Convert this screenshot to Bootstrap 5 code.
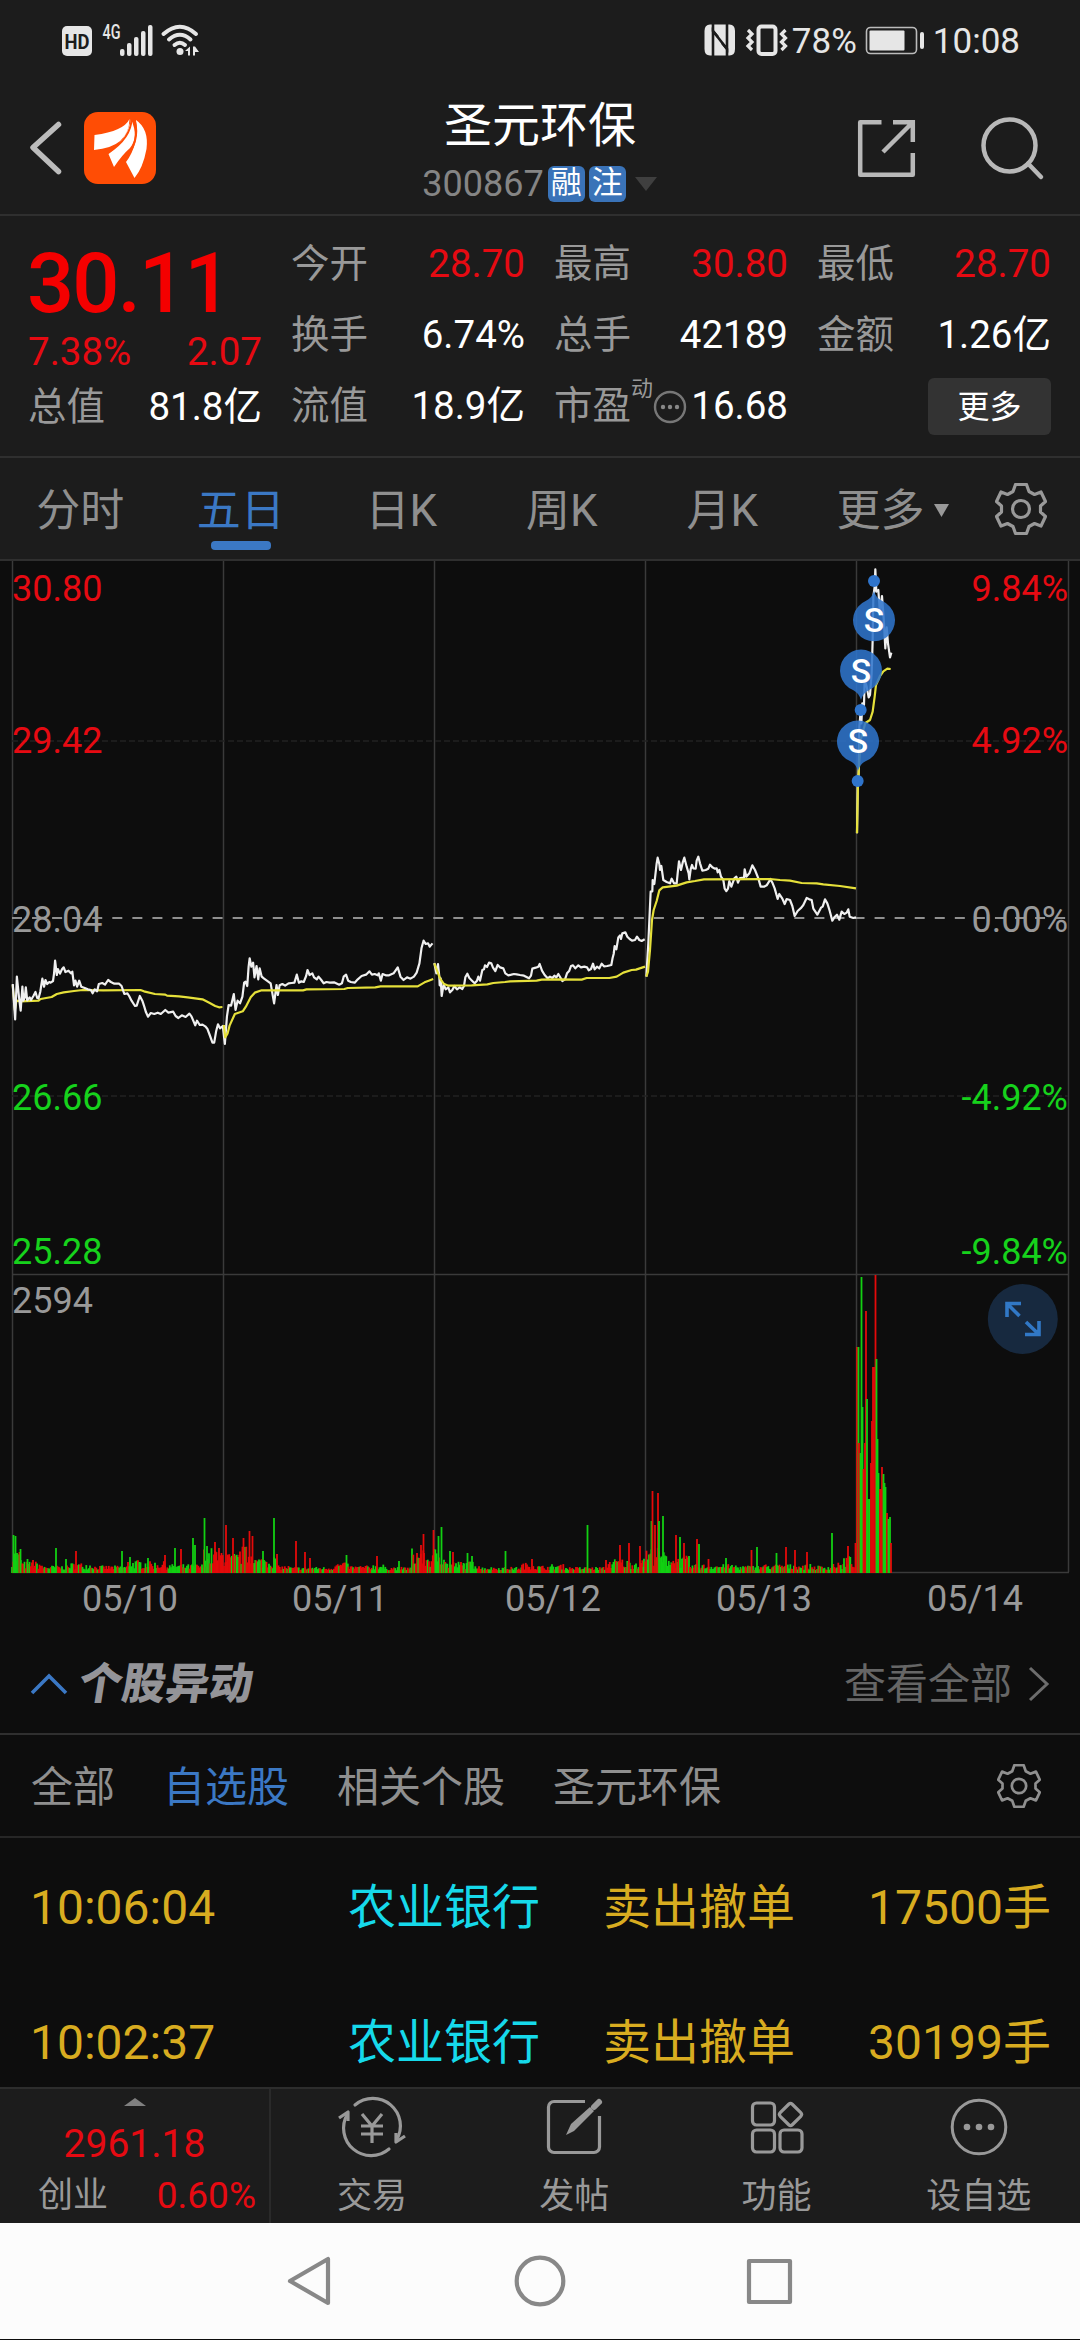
<!DOCTYPE html>
<html lang="zh-CN">
<head>
<meta charset="utf-8">
<meta name="viewport" content="width=device-width, initial-scale=1">
<title>圣元环保 300867</title>
<link rel="stylesheet" href="https://cdn.jsdelivr.net/npm/bootstrap@5.3.0/dist/css/bootstrap.min.css">
<style>
  body { background:#0d0d0d; color:#999; font-family:Roboto,"Noto Sans CJK SC",sans-serif; font-size:38.5px; line-height:1; width:1080px; height:2340px; overflow:hidden; }
  svg { display:block; flex:none; }
  .panel { background:#1c1c1c; }
  .rule { border-bottom:2px solid #2f2f2f; }
  .status { height:82px; padding:0 60px 0 60px; color:#e6e6e6; font-size:35px; }
  .topbar { height:134px; }
  .stock-name { font-size:48px; color:#fff; line-height:56px; }
  .stock-code { font-size:36px; color:#858585; line-height:36px; }
  .tag { width:37px; height:36px; border-radius:6px; background:#3a73b8; color:#fff; font-size:31px; line-height:34px; text-align:center; }
  .quote { height:242px; padding:13px 28px; display:grid; grid-template-columns:repeat(4,234px); column-gap:29px; }
  .cell { height:71px; }
  .cell b { font-weight:400; color:#fff; }
  .up, .cell b.up { color:#e60a12; }
  .price { font-size:83px; font-weight:500; letter-spacing:-1.8px; color:#f40000; line-height:76px; padding-top:17px; margin-left:-1px; height:104px; }
  .dyn { font-size:22px; align-self:flex-start; margin-top:7px; }
  .more-btn { width:123px; height:57px; border-radius:6px; background:#333; color:#fff; font-size:32px; }
  .periods { height:103px; font-size:44px; }
  .periods .nav-item { width:160.500px; text-align:center; position:relative; color:#8f8f8f; padding-top:4px; }
  .periods .more { width:176px; padding-left:34px; }
  .periods .on, .filters .on { color:#3b78c4; }
  .periods .on::after { content:""; position:absolute; left:50%; margin-left:-30px; top:56px; width:60px; height:9px; border-radius:4px; background:#3b78c4; }
  .chart text { font-size:36px; fill:#999; font-family:Roboto,sans-serif; }
  .chart .r { fill:#e60a12; } .chart .g { fill:#16d21c; }
  .chart .grid { stroke:#3a3a3a; stroke-width:1.5; fill:none; }
  .chart polyline { fill:none; stroke-width:2.2; stroke-linejoin:round; vector-effect:non-scaling-stroke; }
  .chart .px { stroke:#f0f0f0; } .chart .av { stroke:#e5e03a; }
  .section-title { height:103px; padding:2px 30px 0; }
  .section-title h2 { font-size:43.5px; font-weight:900; color:#949498; margin:2px 0 0 11px; transform:skewX(-9deg); line-height:1; }
  .see-all { font-size:42px; color:#666; padding-top:3px; }
  .filters { height:103px; padding:0 39px 0 31px; font-size:42px; color:#8f8f8f; border-bottom:2px solid #262626; }
  .filters span { padding-top:4px; }
  .moves { height:249px; overflow:hidden; font-size:48px; color:#d8ac20; }
  .moves .item { height:135px; padding:4px 29px 0 30px; }
  .moves .time { width:318px; } .moves .who { width:255px; color:#16d9ea; }
  .dock { height:136px; border-top:2px solid #2d2d2d; font-size:35px; color:#999; }
  .dock .idx { flex:0 0 271px; border-right:2px solid #2a2a2a; }
  .dock .act { flex:1 1 0; padding-top:6px; }
  .dock .act span { margin-top:20px; }
  .idx-value { font-size:39px; margin-top:18px; }
  .idx-row { margin-top:13px; padding:0 13px 0 38px; }
  .idx-pct { font-size:37px; }
  .sysnav { height:116px; background:#fcfcfc; }
</style>
<script src="https://cdn.jsdelivr.net/npm/bootstrap@5.3.0/dist/js/bootstrap.bundle.min.js"></script>
</head>
<body class="d-flex flex-column m-0">

<svg width="0" height="0" class="position-absolute">
  <symbol id="gear" viewBox="-26 -26 52 52">
    <path d="M-5.500-24.500H5.500L8-17.500L13.500-14.500L20-17L24.500-7.500L19.500-3V3L24.500 7.500L20 17L13.500 14.500L8 17.500L5.500 24.500H-5.500L-8 17.500L-13.500 14.500L-20 17L-24.500 7.500L-19.500 3V-3L-24.500-7.500L-20-17L-13.500-14.500L-8-17.500Z" fill="none" stroke="currentColor" stroke-width="3.200" stroke-linejoin="round"/>
    <circle r="8.500" fill="none" stroke="currentColor" stroke-width="3.200"/>
  </symbol>
</svg>

<div class="panel status d-flex align-items-center justify-content-between">
  <svg width="142" height="82" viewBox="60 0 142 82" fill="#e6e6e6">
    <rect x="62" y="26" width="30" height="30" rx="5"/>
    <text x="77" y="48.500" font-size="20" font-weight="700" text-anchor="middle" fill="#1c1c1c" textLength="25" lengthAdjust="spacingAndGlyphs">HD</text>
    <text x="102.500" y="39" font-size="20" font-weight="500" textLength="18" lengthAdjust="spacingAndGlyphs">4G</text>
    <rect x="120" y="49" width="4.500" height="7" rx="2"/><rect x="127" y="43" width="4.500" height="13" rx="2"/><rect x="134" y="37" width="4.500" height="19" rx="2"/><rect x="141" y="31" width="4.500" height="25" rx="2"/><rect x="148" y="25" width="4.500" height="31" rx="2"/>
    <g fill="none" stroke="#e6e6e6" stroke-width="4" stroke-linecap="round"><path d="M163.500 34Q180 19.500 196 34M169 39.500Q180 30 190.500 39.500M174.500 45Q180 40.500 185 45"/></g>
    <circle cx="180" cy="51.500" r="3.500"/><path d="M185 51l5-4.500v9h-2v-4.500zM193 46.500h2l4 5.500h-4v3.500h-2z"/>
  </svg>
  <div class="d-flex align-items-center">
    <svg width="89" height="82" viewBox="706 0 89 82">
      <path d="M713 24.500H732.500Q738 24.500 738 31V49Q738 55.500 732.500 55.500H713Q707.500 55.500 707.500 49V31Q707.500 24.500 713 24.500Z" fill="#e6e6e6"/>
      <path d="M716 56V31L730 49V24" fill="none" stroke="#1c1c1c" stroke-width="2.600"/><path d="M716 24L716 31L721 37M730 56V49L725 43" fill="none" stroke="#1c1c1c" stroke-width="2.600"/>
      <rect x="761.500" y="26.500" width="17" height="27.500" rx="3" fill="none" stroke="#e6e6e6" stroke-width="4"/>
      <path d="M751 30l4 4-4 4 4 4-4 4 4 4M788.500 30l-4 4 4 4-4 4 4 4-4 4" fill="none" stroke="#e6e6e6" stroke-width="3.200"/>
    </svg>
    <span>78%</span>
    <svg class="ms-2" width="60" height="82" viewBox="866 0 60 82"><rect x="867.500" y="27.500" width="50" height="26" rx="4" fill="none" stroke="#bbb" stroke-width="1.600"/><rect x="870.500" y="30.500" width="35" height="20" rx="1" fill="#e6e6e6"/><rect x="921" y="32" width="4" height="17" rx="2" fill="#e6e6e6"/></svg>
    <span class="ps-2">10:08</span>
  </div>
</div>

<header class="panel topbar rule d-flex justify-content-between">
  <svg width="400" height="132" viewBox="0 82 400 132">
    <path d="M58.500 124.500L33 147.500L58.500 171.500" fill="none" stroke="#bcbcbc" stroke-width="5.500" stroke-linecap="round" stroke-linejoin="round"/>
    <rect x="84" y="112" width="72" height="72" rx="14" fill="#ff4d05"/>
    <path d="M94.500 135Q124 131 129.500 119Q129 147 94 150Z" fill="#fff"/>
    <path d="M108.500 154Q127 139 131 119Q139 137 130 148Q122 155 114 167Z" fill="#fff"/>
    <path d="M126 162Q139 145 136 120Q149 129 146.500 149Q143 168 134.500 178Z" fill="#fff"/>
    <path d="M131.500 119Q131 138 108 153M134.500 119Q141 143 123 160" fill="none" stroke="#ff4d05" stroke-width="2"/>
  </svg>
  <div class="d-flex flex-column align-items-center pt-3">
    <div class="stock-name">圣元环保</div>
    <div class="d-flex align-items-center mt-2 pt-1 ps-0">
      <span class="stock-code">300867</span><span class="tag ms-1">融</span><span class="tag ms-1">注</span>
      <svg class="ms-2" width="24" height="18" viewBox="0 0 24 18"><path d="M1 2H23L12 16Z" fill="#3f3f3f"/></svg>
    </div>
  </div>
  <svg width="400" height="132" viewBox="680 82 400 132" fill="none" stroke="#b8b8b8" stroke-width="4.500">
    <path d="M881.500 122.200H860.200V174.800H912.800V153" stroke-linejoin="round"/><path d="M893 122.200H912.800V142M912 123L883 152"/>
    <circle cx="1009.500" cy="145.500" r="26"/><path d="M1028 163.500L1041 177" stroke-linecap="round"/>
  </svg>
</header>

<section class="panel quote rule">
  <div>
    <div class="price">30.11</div>
    <div class="d-flex justify-content-between up"><span>7.38%</span><span>2.07</span></div>
    <div class="d-flex justify-content-between align-items-center cell mt-0"><span>总值</span><b>81.8亿</b></div>
  </div>
  <div>
    <div class="cell d-flex justify-content-between align-items-center"><span>今开</span><b class="up">28.70</b></div>
    <div class="cell d-flex justify-content-between align-items-center"><span>换手</span><b>6.74%</b></div>
    <div class="cell d-flex justify-content-between align-items-center"><span>流值</span><b>18.9亿</b></div>
  </div>
  <div>
    <div class="cell d-flex justify-content-between align-items-center"><span>最高</span><b class="up">30.80</b></div>
    <div class="cell d-flex justify-content-between align-items-center"><span>总手</span><b>42189</b></div>
    <div class="cell d-flex align-items-center"><span>市盈</span><span class="dyn">动</span>
      <svg width="34" height="34" viewBox="0 0 34 34"><circle cx="17" cy="17" r="15" fill="none" stroke="#777" stroke-width="2.400"/><g fill="#888"><circle cx="10" cy="17" r="2.200"/><circle cx="17" cy="17" r="2.200"/><circle cx="24" cy="17" r="2.200"/></g></svg>
      <b class="ms-auto">16.68</b></div>
  </div>
  <div>
    <div class="cell d-flex justify-content-between align-items-center"><span>最低</span><b class="up">28.70</b></div>
    <div class="cell d-flex justify-content-between align-items-center"><span>金额</span><b>1.26亿</b></div>
    <div class="cell d-flex justify-content-end align-items-center"><span class="more-btn d-flex align-items-center justify-content-center">更多</span></div>
  </div>
</section>

<nav class="panel periods rule nav flex-nowrap align-items-center">
  <span class="nav-item">分时</span><span class="nav-item on">五日</span><span class="nav-item">日K</span><span class="nav-item">周K</span><span class="nav-item">月K</span>
  <span class="nav-item more d-flex align-items-center">更多<svg class="ms-2" width="17" height="16" viewBox="0 0 17 16"><path d="M1 1H16L8.500 14Z" fill="#999"/></svg></span>
  <svg class="ms-3" width="52" height="52"><use href="#gear"/></svg>
</nav>

<svg class="chart" width="1080" height="1071" viewBox="0 561 1080 1071">
  <path class="grid" d="M12.500 561V1572M223.500 561V1572M434.500 561V1572M645.500 561V1572M856.500 561V1572M1068.500 561V1572M12 1274.500H1069M12 1572.500H1069"/>
  <path d="M12 741H1068M12 1096H1068" stroke="#222" stroke-width="1.500" stroke-dasharray="6 3"/>
  <path d="M12 918H1068" stroke="#8f8f8f" stroke-width="2.200" stroke-dasharray="10 10.060"/>
  <g id="volume" stroke-width="1.800"></g>

  <g transform="translate(0 860) scale(.34435 .33333)">
    <polyline class="av" points="37,375 43,450 48,422 60,424 112,422 118,417 150,411 165,402 185,397 215,393 240,390 300,391 408,390 418,394 450,402 480,404 485,407 520,409 545,412 588,418 605,427 625,438 636,442 646,441"/>
    <polyline class="px" points="37,372 44,478 49,350 55,410 60,452 65,380 68,422 72,412 75,382 79,421 86,412 90,420 97,408 103,396 108,414 112,415 117,395 120,375 123,356 128,380 132,360 137,372 143,366 147,368 154,363 157,340 160,302 165,345 168,327 174,341 180,328 185,322 190,336 199,332 206,340 210,335 215,376 219,362 224,380 230,362 236,380 246,384 255,388 264,390 269,400 275,388 282,394 287,372 297,369 305,374 314,360 322,366 332,371 346,371 353,378 361,402 370,400 375,408 382,422 392,438 397,437 406,408 414,424 419,440 424,457 430,470 438,459 448,462 458,458 467,462 480,450 489,458 503,455 510,468 518,474 528,466 539,471 550,461 556,469 567,496 572,482 580,495 588,494 596,499 602,506 609,525 617,548 622,548 628,512 633,493 639,505 647,498 653,552 659,470 664,435 671,437 679,402 684,450 690,422 697,430 704,410 709,368 713,365 718,378 722,320 725,295 730,320 735,308 739,352 745,318 750,358 754,325 760,350 767,356 775,362 786,370 791,400 796,430 803,375 807,405 812,376 820,372 828,377 838,370 847,369 855,368 862,344 868,368 875,364 882,366 889,348 893,330 899,345 907,340 912,352 920,358 925,350 933,360 940,370 948,366 958,368 970,367 985,374 993,370 998,350 1005,344 1011,362 1019,366 1030,368 1039,358 1050,348 1063,344 1073,334 1080,344 1088,342 1097,346 1100,340 1106,362 1111,342 1120,346 1130,346 1143,340 1155,322 1163,350 1172,360 1182,352 1192,356 1202,350 1210,338 1218,310 1224,265 1230,242 1236,252 1243,250 1248,260 1256,250"/>
    <polyline class="av" points="650,495 654,532 661,520 667,496 682,462 705,454 714,440 728,412 740,398 760,391 880,391 890,388 1000,387 1010,384 1090,382 1105,379 1213,379 1233,367 1245,362 1258,357"/>
  </g>
  <g transform="translate(400 860) scale(.33333)">
    <polyline class="px" points="103,309 109,340 114,312 118,350 119,376 122,355 125,408 131,373 137,388 145,382 150,397 157,390 163,378 171,388 179,382 187,387 192,378 196,352 202,341 208,354 216,362 224,370 231,362 235,350 240,362 247,330 252,328 255,316 261,321 267,308 274,310 279,323 286,333 293,315 300,322 310,325 316,340 325,346 334,344 342,342 350,343 360,345 372,347 387,355 393,347 397,326 407,323 415,320 419,312 426,332 434,345 443,355 450,350 457,354 463,347 469,352 475,342 482,354 487,363 495,358 501,340 508,332 513,318 519,316 526,325 535,316 543,322 553,320 561,322 566,331 573,327 579,311 584,328 591,320 598,325 605,311 612,319 622,318 634,315 638,293 641,282 644,258 649,268 655,232 660,226 663,237 667,220 676,217 682,230 689,237 696,242 705,240 711,230 718,240 725,243 734,238"/>
    <polyline class="av" points="103,310 120,355 131,371 145,377 215,376 262,373 280,369 315,366 330,364 410,362 425,359 465,358 545,359 560,354 628,354 650,350 670,338 695,330 708,329 735,320"/>
  </g>
  <g transform="translate(540 820) scale(.33333)">
    <polyline class="px" points="319,470 325,370 329,280 332,215 337,214 338,180 343,192 350,130 353,113 358,132 360,150 364,138 370,180 380,186 390,190 395,176 402,190 410,190 413,160 417,124 423,150 428,128 433,113 440,140 446,160 448,178 452,148 456,135 460,145 467,146 470,122 475,110 480,130 487,152 497,150 505,146 510,134 517,142 525,146 530,145 533,157 538,150 543,170 550,180 554,206 559,213 564,206 568,183 574,200 583,175 589,170 594,188 600,174 612,173 614,148 619,170 628,160 637,136 645,150 655,175 662,200 672,200 680,196 687,185 691,177 698,190 704,205 713,237 718,222 727,236 734,252 740,237 750,240 757,258 764,288 773,273 784,263 790,255 800,234 808,238 815,240 820,266 832,284 843,263 848,260 855,238 862,250 869,272 877,302 883,292 891,284 898,299 905,275 913,282 920,278 925,268 929,290 940,294 948,292"/>
    <polyline class="av" points="319,470 324,455 330,390 336,300 341,270 350,243 358,211 368,202 410,197 440,187 465,183 492,178 690,177 720,180 750,182 785,189 830,190 850,193 900,198 948,205"/>
  </g>
  <g transform="translate(780 540) scale(.33333)">
    <polyline class="px" points="231,880 233,740 236,700 238,560 241,525 244,550 247,490 252,495 254,420 260,440 266,472 270,465 275,400 278,300 280,170 284,140 286,88 289,155 295,150 300,220 306,168 311,235 316,325 320,262 324,310 330,352 334,338"/>
    <polyline class="av" points="231,880 234,725 242,600 256,549 270,540 278,515 284,470 288,435 300,408 310,394 322,386 332,387"/>
    <g fill="#2f74cb">
      <g fill-opacity=".88"><path d="M282 153Q288 175 307 183A63 63 0 1 1 257 183Q276 175 282 153Z"/><path d="M243 480Q236 458 219 450A63 63 0 1 1 267 450Q250 458 243 480Z"/><path d="M234 692Q227 671 210 663A63 63 0 1 1 258 663Q241 671 234 692Z"/></g>
      <circle cx="282" cy="123" r="18"/><circle cx="242" cy="510" r="18"/><circle cx="233" cy="723" r="18"/>
    </g>
    <g font-weight="500" text-anchor="middle"><text style="font-size:101px;fill:#fff" x="282" y="275">S</text><text style="font-size:101px;fill:#fff" x="243" y="428">S</text><text style="font-size:101px;fill:#fff" x="234" y="640">S</text></g>
  </g>

  <text class="r" x="12" y="601">30.80</text><text class="r" x="12" y="753">29.42</text><text x="12" y="931.500">28.04</text><text class="g" x="12" y="1110">26.66</text><text class="g" x="12" y="1264">25.28</text>
  <g text-anchor="end"><text class="r" x="1068" y="601">9.84%</text><text class="r" x="1068" y="753">4.92%</text><text x="1068" y="931.500">0.00%</text><text class="g" x="1068" y="1110">-4.92%</text><text class="g" x="1068" y="1264">-9.84%</text></g>
  <text x="12" y="1312.500">2594</text>
  <g text-anchor="middle"><text x="130" y="1610.500">05/10</text><text x="340" y="1610.500">05/11</text><text x="553" y="1610.500">05/12</text><text x="764" y="1610.500">05/13</text><text x="975" y="1610.500">05/14</text></g>
  <circle cx="1022.800" cy="1319" r="35" fill="#17293f"/>
  <path d="M1007 1317V1303.500H1021M1007.500 1304L1019.500 1316M1039 1321V1334.500H1025M1038.500 1334L1026 1322" fill="none" stroke="#3178c6" stroke-width="3.600"/>
</svg>

<div class="section-title rule d-flex align-items-center">
  <svg width="38" height="24" viewBox="0 0 38 24"><path d="M2 21L19 4L36 21" fill="none" stroke="#3b78c4" stroke-width="3.600"/></svg>
  <h2>个股异动</h2>
  <span class="see-all ms-auto">查看全部</span>
  <svg class="ms-3" width="22" height="36" viewBox="0 0 22 36"><path d="M2 2L19 18L2 34" fill="none" stroke="#6d6d6d" stroke-width="3"/></svg>
</div>

<div class="filters d-flex align-items-center">
  <span>全部</span><span class="on ms-5">自选股</span><span class="ms-5">相关个股</span><span class="ms-5">圣元环保</span>
  <svg class="ms-auto" width="44" height="44"><use href="#gear"/></svg>
</div>

<div class="moves">
  <div class="item d-flex align-items-center"><span class="time">10:06:04</span><span class="who">农业银行</span><span>卖出撤单</span><span class="ms-auto">17500手</span></div>
  <div class="item d-flex align-items-center"><span class="time">10:02:37</span><span class="who">农业银行</span><span>卖出撤单</span><span class="ms-auto">30199手</span></div>
</div>

<footer class="panel dock d-flex">
  <div class="idx d-flex flex-column align-items-center">
    <svg class="mt-2" width="24" height="10" viewBox="0 0 24 10"><path d="M1 9L12 1L23 9Z" fill="#808080"/></svg>
    <span class="up idx-value">2961.18</span>
    <div class="idx-row d-flex justify-content-between align-items-center align-self-stretch"><span>创业</span><span class="up idx-pct">0.60%</span></div>
  </div>
  <div class="act d-flex flex-column align-items-center">
    <svg width="68" height="64" viewBox="-34 -32 68 64" fill="none" stroke="#999" stroke-width="3.200"><path d="M-17-22A27.500 27.500 0 0 1 24.500 13M17 22A27.500 27.500 0 0 1-24.500-13" stroke-linecap="round"/><path d="M-33-9L-24-15V-6M33 9L24 15V6" stroke-linejoin="round"/><path d="M-10-13L0-1L10-13M0-1V16M-11-1H11M-11 7H11"/></svg>
    <span>交易</span>
  </div>
  <div class="act d-flex flex-column align-items-center">
    <svg width="68" height="64" viewBox="-34 -32 68 64" fill="none" stroke="#999" stroke-width="3.200"><path d="M11-25.500H-20A5.500 5.500 0 0 0-25.500-20V20A5.500 5.500 0 0 0-20 25.500H20A5.500 5.500 0 0 0 25.500 20V-11"/><path d="M-8 8L-3-3L16-20L20-16L0 4Z" fill="#999" stroke="none"/><path d="M20-20L25-25" stroke-width="6" stroke-linecap="round"/></svg>
    <span>发帖</span>
  </div>
  <div class="act d-flex flex-column align-items-center">
    <svg width="68" height="64" viewBox="-34 -32 68 64" fill="none" stroke="#999" stroke-width="3.200"><rect x="-24.500" y="-24" width="22" height="22" rx="4"/><rect x="-24.500" y="3" width="22" height="22" rx="4"/><rect x="3" y="3" width="22" height="22" rx="4"/><rect x="5" y="-21" width="17" height="17" rx="2.500" transform="rotate(45 13.500 -12.500)"/></svg>
    <span>功能</span>
  </div>
  <div class="act d-flex flex-column align-items-center">
    <svg width="68" height="64" viewBox="-34 -32 68 64"><circle r="26.800" fill="none" stroke="#999" stroke-width="3"/><g fill="#999"><circle cx="-12" r="3.300"/><circle r="3.300"/><circle cx="12" r="3.300"/></g></svg>
    <span>设自选</span>
  </div>
</footer>

<div class="sysnav d-flex justify-content-center">
  <svg width="540" height="116" viewBox="270 2224 540 116" fill="none" stroke="#888" stroke-width="4.200" stroke-linejoin="round"><path d="M328 2260V2304L290 2282Z"/><circle cx="540" cy="2282" r="23.300"/><rect x="749" y="2262" width="41" height="41"/></svg>
</div>

<script>
  // Five-day minute volume: a low background level plus the notable bars, [x, height, colour].
  var svg = document.getElementById('volume'), seed = 7;
  function rnd() { seed = (seed * 16807) % 2147483647; return seed / 2147483647; }
  function bar(x, h, up) {
    var l = document.createElementNS('http://www.w3.org/2000/svg', 'path');
    l.setAttribute('d', 'M' + x.toFixed(1) + ' 1573V' + (1573 - h).toFixed(1));
    l.setAttribute('stroke', up ? '#e40a0a' : '#12d012');
    svg.appendChild(l);
  }
  // Local activity: [from, to, mean height, share of rising bars]
  [[12,22,16,.3],[22,42,7,.8],[42,70,4,.4],[70,95,6,.35],[95,118,4,.8],[118,128,4,.4],[128,150,8,.2],[150,166,7,.85],[166,182,5,.4],[182,204,5,.5],[204,214,17,.25],[214,228,17,.8],[228,240,13,.5],[240,254,18,.8],[254,264,10,.4],[264,276,11,.2],[276,290,4,.8],[290,334,3,.5],[334,348,6,.8],[348,372,4,.9],[372,384,5,.3],[384,412,3,.5],[412,424,17,.85],[424,434,13,.6],[434,446,17,.55],[446,464,7,.6],[464,480,7,.35],[480,522,3,.5],[522,534,6,.85],[534,552,4,.7],[552,566,5,.4],[566,606,3,.6],[606,626,9,.75],[626,644,8,.5],[644,660,17,.7],[660,672,14,.2],[672,684,10,.5],[684,690,11,.3],[690,700,5,.6],[700,712,5,.4],[712,738,5,.3],[738,762,4,.5],[762,784,5,.5],[784,812,5,.4],[812,832,4,.5],[832,844,6,.6],[844,855,11,.5]].forEach(function (z) {
    for (var x = z[0]; x < z[1]; x += 1.25) bar(x, 2 + z[2] * (.25 + rnd() * 1.15), rnd() < z[3]);
  });
  [[13.500,38,0],[15.500,37,0],[20.500,24,0],[27.500,14,0],[33,13,1],[56,25,0],[66,14,0],[76,22,1],[122,22,0],[130,16,0],[148,15,0],[165,18,1],[175,25,0],[181,24,1],[193,35,0],[195,28,0],[204.500,55,0],[207,27,0],[215,31,1],[226,48,1],[233,35,1],[243.500,35,1],[249.500,42,1],[252.500,37,1],[263,22,0],[274,55,0],[277,19,1],[296,32,1],[305,21,1],[310,15,1],[346.500,18,0],[377,17,1],[399,12,0],[421,28,1],[423.500,39,1],[433.500,43,1],[438.500,37,0],[441.500,46,0],[450,22,0],[453,21,1],[467.500,20,0],[472,17,0],[505.500,22,0],[532,14,1],[587.500,48,0],[620,28,1],[629,30,1],[640,27,1],[651.500,52,0],[652.500,82,1],[655,48,1],[658,80,1],[659,52,0],[663,57,0],[676,38,1],[680,36,0],[684,30,1],[697,34,1],[699,29,0],[708.500,14,1],[726,15,0],[751.500,23,1],[757,26,0],[776.500,20,0],[786,26,1],[795,23,1],[807,21,1],[832,40,0],[848,27,1]].forEach(function (b) { bar(b[0], b[1], b[2]); });
  // Opening burst of the last day
  [[855.500,30,1],[857,226,1],[858.500,226,0],[859,130,1],[860.500,120,0],[861.500,296,0],[862.500,166,0],[863.500,104,1],[865,130,1],[866,262,1],[867,174,0],[868,74,0],[869.500,74,0],[871,110,1],[872,152,1],[873,206,1],[874,206,1],[875.500,298,1],[876.500,214,0],[877.500,134,0],[878.500,100,0],[880,84,1],[881,84,1],[882,106,1],[883.500,99,0],[884.500,90,0],[885.500,86,0],[887,60,1],[888.500,54,0],[890,56,0],[891,30,1]].forEach(function (b) { bar(b[0], b[1], b[2]); });
</script>
</body>
</html>
